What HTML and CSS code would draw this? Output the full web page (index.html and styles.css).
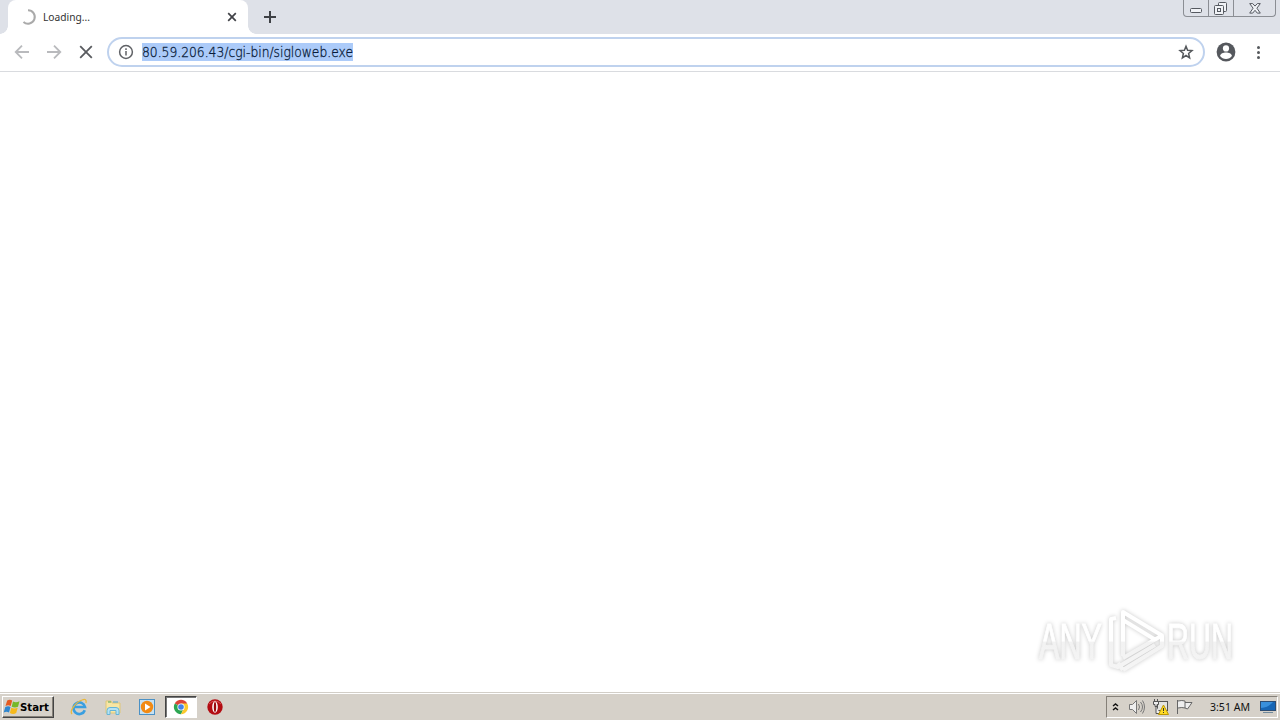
FILE: index.html
```html
<!DOCTYPE html>
<html lang="en">
<head>
<meta charset="utf-8">
<title>Loading...</title>
<link rel="stylesheet" href="styles.css">
</head>
<body>
<div class="desktop">
  <header class="tabstrip">
    <div class="tab">
      <svg class="spinner" width="16" height="16" viewBox="0 0 16 16"><path d="M8 1.300a6.700 6.700 0 1 1-4.500 11.600" /></svg>
      <span class="tab-title"><svg width="48" height="16"><text x="0" y="12" textLength="47" lengthAdjust="spacingAndGlyphs">Loading...</text></svg></span>
      <svg class="tab-close" width="10" height="10" viewBox="0 0 10 10"><path d="M1.200 1.200l7.600 7.600M8.800 1.200L1.200 8.800"/></svg>
    </div>
    <svg class="new-tab" width="14" height="14" viewBox="0 0 14 14"><path d="M7 1v12M1 7h12"/></svg>
    <div class="window-controls">
      <span class="control minimize"><svg width="12" height="6" viewBox="0 0 12 6"><rect x=".5" y="1.500" width="11" height="4" rx="1"/></svg></span>
      <span class="control restore"><svg width="14" height="14" viewBox="0 0 14 14"><path d="M4.500 3.500v-2q0-1 1-1h6q1 0 1 1v7q0 1-1 1h-2"/><rect x=".5" y="3.500" width="9" height="9" rx="1"/><rect x="3.500" y="6.500" width="3" height="3"/></svg></span>
      <span class="control close"><svg width="12" height="11" viewBox="0 0 12 11"><path d="M.7.600h3L6 3.100 8.300.600h3L7.900 5.200l3.400 4.900h-3L6 7.300l-2.300 2.800h-3l3.400-4.900z"/></svg></span>
    </div>
  </header>
  <nav class="toolbar">
    <div class="nav-buttons">
      <svg class="muted" width="16" height="16" viewBox="0 0 16 16"><path d="M15 8H2M8 1.700L1.700 8 8 14.300"/></svg>
      <svg class="muted" width="16" height="16" viewBox="0 0 16 16"><path d="M1 8h13M8 1.700L14.300 8 8 14.300"/></svg>
      <svg class="stop" width="16" height="16" viewBox="0 0 16 16"><path d="M2.200 2.200l11.600 11.600M13.800 2.200L2.200 13.800"/></svg>
    </div>
    <div class="omnibox">
      <svg class="info" width="16" height="16" viewBox="0 0 16 16"><circle cx="8" cy="8" r="6.400"/><path d="M8 7v4.500M8 4.200v1.700"/></svg>
      <span class="url"><svg width="211" height="18"><text x="0" y="14" textLength="211" lengthAdjust="spacingAndGlyphs">80.59.206.43/cgi-bin/sigloweb.exe</text></svg></span>
      <svg class="star" width="16" height="16" viewBox="0 0 16 16"><path d="M8 2.200l1.600 4 4.400.4-3.400 2.900 1 4.300L8 11.500l-3.600 2.300 1-4.300L2 6.600l4.400-.4z"/></svg>
    </div>
    <svg class="profile" width="20" height="20" viewBox="0 0 20 20"><circle cx="10" cy="10" r="9.400" fill="#55585d"/><circle cx="10" cy="6.400" r="3.100" fill="#fff"/><path d="M4.100 14c.3-2.300 3.200-3.400 5.900-3.400s5.600 1.100 5.900 3.400c-1.400 1.900-3.400 3-5.900 3s-4.500-1.100-5.900-3z" fill="#fff"/></svg>
    <svg class="menu" width="5" height="14" viewBox="0 0 5 14"><circle cx="2.500" cy="2.500" r="1.500"/><circle cx="2.500" cy="7.500" r="1.500"/><circle cx="2.500" cy="12.500" r="1.500"/></svg>
  </nav>
  <main class="page">
    <div class="watermark">
      <svg width="220" height="80" viewBox="0 0 220 80">
        <defs><linearGradient id="fade" gradientUnits="userSpaceOnUse" x1="0" y1="10" x2="0" y2="72"><stop offset=".5" stop-color="#fff"/><stop offset=".52" stop-color="#f2f2f2"/><stop offset="1" stop-color="#f5f5f5"/></linearGradient></defs>
        <text x="14" y="59" textLength="63" lengthAdjust="spacingAndGlyphs">ANY</text>
        <text x="142" y="59" textLength="66" lengthAdjust="spacingAndGlyphs">RUN</text>
        <path class="mark" d="M98 56V12l39 23.500L98 58M98 20l31 19M91 18l-5 1v46l7 2 37-22M98 70l39-24V36M93 63l5 7"/>
      </svg>
    </div>
  </main>
  <footer class="taskbar">
    <div class="start">
      <svg width="16" height="16" viewBox="0 0 16 16"><path d="M3.200 1.500q2.500-1.600 5 0L6.700 7Q4.200 5.500 1.500 7z" fill="#e45a20"/><path d="M9 2.500q3 1.500 6.500-.3L14 7.700q-3 1.500-6.300 0z" fill="#76b82a"/><path d="M1.300 8q3-1.500 5.200 0L5 13.500Q2.500 11.800-.3 13.500z" fill="#2f86cf"/><path d="M7.300 8.700q3 1.500 6.400 0L12.200 14q-3 1.800-6.300 0z" fill="#f6b91b"/></svg>
      <span><svg width="30" height="14"><text x="0" y="11" textLength="29" lengthAdjust="spacingAndGlyphs">Start</text></svg></span>
    </div>
    <div class="launchers">
      <span class="launcher"><svg width="18" height="18" viewBox="0 0 18 18"><path d="M14.800 12.200A5.800 5.800 0 1 1 15 9H5" fill="none" stroke="#3a9fe0" stroke-width="2.600"/><path d="M2 16C-1 13 6 4 12 2q5-2 4 3" fill="none" stroke="#e9b83c" stroke-width="1.300"/></svg></span>
      <span class="launcher"><svg width="18" height="18" viewBox="0 0 18 18"><path d="M2 3h5l1 2h8v10H2z" fill="#f8e6a4" stroke="#dfc779"/><path d="M4 4h3" stroke="#58a65c"/><path d="M9 4h5" stroke="#55a6cc"/><path d="M3 16.500v-4q0-3 3-3h6q3 0 3 3v4h-3v-4H6v4z" fill="#b5e2f4" stroke="#65b5d8"/></svg></span>
      <span class="launcher"><svg width="18" height="18" viewBox="0 0 18 18"><rect x="1.500" y="1.500" width="15" height="15" fill="#c6e1f2" stroke="#4b91c5"/><circle cx="9" cy="9" r="6.200" fill="#f28a13"/><path d="M7 5.500l5.500 3.500L7 12.500z" fill="#fff"/></svg></span>
      <span class="launcher active"><svg width="16" height="16" viewBox="0 0 16 16"><path d="M8 8L1.800 4.400A7.200 7.200 0 0 1 14.200 4.400z" fill="#dc4437"/><path d="M8 8L1.800 4.400A7.200 7.200 0 0 0 8 15.200L11 9z" fill="#2da652"/><path d="M8 4.400h6.200A7.200 7.200 0 0 1 8 15.200L11 9z" fill="#fbc92d"/><circle cx="8" cy="8" r="3.600" fill="#fff"/><circle cx="8" cy="8" r="2.800" fill="#4382e8"/></svg></span>
      <span class="launcher"><svg width="16" height="16" viewBox="0 0 16 16"><circle cx="8" cy="8" r="7.700" fill="#b30c12"/><path d="M2 5q6-6 12 0" fill="none" stroke="#d95254"/><ellipse cx="8" cy="8" rx="2.800" ry="5.800" fill="#fff"/><ellipse cx="8" cy="8" rx="1.200" ry="5" fill="#9b080c"/></svg></span>
    </div>
    <div class="tray">
      <svg class="chevrons" width="7" height="9" viewBox="0 0 7 9"><path d="M1 3l2.500-2L6 3M1 7l2.500-2L6 7"/></svg>
      <svg class="speaker" width="18" height="16" viewBox="0 0 18 16"><path d="M1.500 5.500h3l4-4v13l-4-4h-3z"/><path fill="none" d="M10.500 5q2 3 0 6M12.500 3q4 5 0 10M14.500 1.500q4 6.500 0 13"/></svg>
      <svg class="network" width="18" height="16" viewBox="0 0 18 16"><rect x="5.500" y="2.500" width="10" height="9" fill="#e4e4e0" stroke="#555"/><path d="M1.500 2.500h5v3h-1.500v2H3v-2H1.500zM2.500 0v2M5.500 0v2M4 7v7.500h4" fill="#eee" stroke="#555"/><path d="M11.500 6l5 9.500h-10z" fill="#ffdb24" stroke="#bd9700"/><path d="M11.500 9v3M11.500 13v1" stroke="#333"/></svg>
      <svg class="flag" width="17" height="16" viewBox="0 0 17 16"><path d="M1.500 1v14M2 2q4-1 7 0v7q-3-1-7 0M9 3.500h7l-2 3-2.500 3.500L9 9"/></svg>
      <span class="clock"><svg width="42" height="14"><text x="0" y="11" textLength="40" lengthAdjust="spacingAndGlyphs">3:51 AM</text></svg></span>
      <svg class="display" width="16" height="14" viewBox="0 0 16 14"><rect x=".5" y="1.500" width="15" height="9" fill="#1766b5" stroke="#2d4d73"/><path d="M1 8q7 0 12-6H1z" fill="#3990dc"/><path d="M3 12.500h10" stroke="#71899b"/></svg>
    </div>
  </footer>
</div>
</body>
</html>
```
FILE: styles.css
```css
* { box-sizing: border-box; }
body { margin: 0; font-family: "DejaVu Sans", sans-serif; background: #fff; }
svg { display: block; flex-shrink: 0; overflow: visible; }
.desktop { width: 1280px; height: 720px; display: flex; flex-direction: column; overflow: hidden; }
.tabstrip { height: 34px; display: flex; padding-left: 8px; background: linear-gradient(#dee1e8, #dee1e8) 0 0 / 8px 26px no-repeat, radial-gradient(circle at 0 0, #dee1e8 7.5px, #fff 8px) 0 26px / 8px 8px no-repeat, radial-gradient(circle at 100% 0, #dee1e8 7.5px, #fff 8px) 248px 26px / 8px 8px no-repeat, #dee1e8; }
.tab { width: 240px; height: 34px; background: #fff; border-radius: 8px 8px 0 0; display: flex; align-items: center; padding: 0 11px 0 12px; }
.spinner { fill: none; stroke: #aaa; stroke-width: 2; }
.tab-title { margin-left: 7px; font: 11px "Noto Sans", sans-serif; fill: #333; }
.tab-close { margin-left: auto; stroke: #404247; stroke-width: 1.7; }
.new-tab { margin: 10px 0 0 15px; stroke: #3e4146; stroke-width: 2; }
.window-controls { margin: 0 4px 0 auto; width: 93px; height: 17px; display: flex; border: 1px solid #8b8e94; border-top: 0; border-radius: 0 0 4px 4px; }
.control { display: flex; align-items: center; justify-content: center; border-right: 1px solid #8b8e94; fill: #f0f2f6; stroke: #555960; }
.minimize { width: 25px; padding-top: 4px; }
.restore { width: 25px; padding-top: 2px; }
.close { flex: 1; border: 0; }
.toolbar { height: 38px; display: flex; align-items: center; border-bottom: 1px solid #d9dbdf; padding-bottom: 1px; }
.nav-buttons { width: 107px; padding-left: 14px; display: flex; gap: 16px; }
.nav-buttons svg { fill: none; stroke-width: 1.8; }
.nav-buttons .muted { stroke: #b9babd; }
.nav-buttons .stop { stroke: #595b5f; }
.omnibox { width: 1098px; height: 30px; border: 2px solid #bfd2ee; border-radius: 15px; display: flex; align-items: center; padding: 0 9px; }
.info { fill: none; stroke: #606266; stroke-width: 1.5; }
.url { height: 18px; width: 211px; margin-left: 8px; background: #accbf9; font: 200 14px "DejaVu Sans Light", "DejaVu Sans", sans-serif; fill: #071a38; stroke: #071a38; stroke-width: .3; }
.star { margin-left: auto; fill: none; stroke: #55585c; stroke-width: 1.5; }
.profile { margin-left: 11px; }
.menu { margin-left: 20px; fill: #55585c; }
.page { height: 620px; display: flex; justify-content: flex-end; align-items: flex-end; padding: 0 35px 12px 0; }
.watermark { width: 220px; height: 80px; font: 50px "Liberation Sans Narrow", "Liberation Sans", sans-serif; filter: drop-shadow(0 0 2px #c8c8c8); }
.watermark text { fill: url(#fade); stroke: url(#fade); stroke-width: 1; }
.mark { fill: none; stroke: url(#fade); stroke-width: 4; stroke-linejoin: round; }
.taskbar { height: 28px; background: #d6d1c9; border-top: 1px solid #d2cec7; box-shadow: inset 0 1px #fff; display: flex; align-items: center; padding: 2px 2px 1px; }
.start { height: 22px; width: 52px; display: flex; align-items: center; padding-left: 1px; border: 1px solid; border-color: #fff #444 #444 #fff; box-shadow: inset -1px -1px #858078; font: bold 11px "DejaVu Sans", sans-serif; }
.launchers { display: flex; margin-left: 8px; align-items: center; }
.launcher { width: 34px; height: 22px; display: flex; align-items: center; justify-content: center; }
.launcher.active { width: 32px; margin: 0 1px; background: #fff; border: 1px solid; border-color: #444 #fff #fff #444; box-shadow: inset 1px 1px #777; }
.tray { width: 172px; height: 22px; margin-left: auto; display: flex; align-items: center; border: 1px solid; border-color: #858078 #fff #fff #858078; padding-left: 5px; }
.chevrons { fill: none; stroke: #111; stroke-width: 1.5; }
.speaker { margin-left: 9px; fill: #eee; stroke: #777; }
.network { margin-left: 6px; }
.flag { margin-left: 6px; fill: #eee; stroke: #666; }
.clock { margin-left: 17px; font: 11px "Noto Sans", sans-serif; fill: #111; }
.display { margin-left: 8px; }
```
